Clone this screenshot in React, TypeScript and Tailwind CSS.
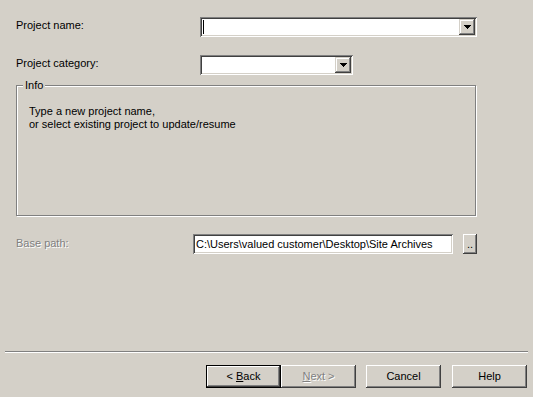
const sunken =
  "shadow-[inset_1px_1px_0_#808080,inset_-1px_-1px_0_#ffffff,inset_2px_2px_0_#404040,inset_-2px_-2px_0_#d4d0c8]";
const raised =
  "shadow-[inset_-1px_-1px_0_#404040,inset_1px_1px_0_#ffffff,inset_-2px_-2px_0_#808080,inset_2px_2px_0_#d4d0c8]";
const comboBtn =
  "shadow-[inset_-1px_-1px_0_#404040,inset_1px_1px_0_#d4d0c8,inset_-2px_-2px_0_#808080,inset_2px_2px_0_#ffffff]";

const Arrow = () => (
  <svg width="7" height="4" viewBox="0 0 7 4">
    <path d="M0 0h7v1H0zM1 1h5v1H1zM2 2h3v1H2zM3 3h1v1H3z" fill="#000" />
  </svg>
);

const Combo = ({ width, caret }: { width: string; caret?: boolean }) => (
  <div className={`${width} h-5 bg-white flex items-center p-[2px] ${sunken}`}>
    <div className="flex-1 h-full flex items-center pl-[1px]">
      {caret && <div className="w-px h-[14px] bg-black" />}
    </div>
    <div className={`w-4 h-4 bg-[#d4d0c8] flex items-center justify-center ${comboBtn}`}>
      <Arrow />
    </div>
  </div>
);

const Button = ({
  children,
  isDefault,
  disabled,
  className,
}: {
  children: React.ReactNode;
  isDefault?: boolean;
  disabled?: boolean;
  className?: string;
}) => (
  <div
    className={`w-[75px] h-[23px] flex items-center justify-center ${
      isDefault ? "border border-black" : ""
    } ${className ?? ""}`}
  >
    <div
      className={`w-full h-full flex items-center justify-center ${raised} ${
        disabled ? "text-[#808080] [text-shadow:1px_1px_0_#ffffff]" : ""
      }`}
    >
      {children}
    </div>
  </div>
);

const App = () => {
  return (
    <div className="w-[533px] h-[397px] bg-[#d4d0c8] flex flex-col font-['Liberation_Sans',Arial,sans-serif] text-[11px] leading-[13px] text-black">
      <div className="flex items-start mt-[17px]">
        <span className="w-[200px] pl-4 mt-[2px]">Project name:</span>
        <Combo width="w-[277px]" caret />
      </div>

      <div className="flex items-start mt-[18px]">
        <span className="w-[200px] pl-4 mt-[2px]">Project category:</span>
        <Combo width="w-[153px]" />
      </div>

      <div className="relative mt-[10px] ml-4 w-[460px] h-[131px] border border-[#808080] shadow-[1px_1px_0_#ffffff,inset_1px_1px_0_#ffffff] pt-[19px] pl-[12px]">
        <span className="absolute -top-[7px] left-[6px] px-[2px] bg-[#d4d0c8]">Info</span>
        <div>Type a new project name,</div>
        <div>or select existing project to update/resume</div>
      </div>

      <div className="flex items-start mt-[18px]">
        <span className="w-[193px] pl-4 mt-[3px] text-[#808080] [text-shadow:1px_1px_0_#ffffff]">
          Base path:
        </span>
        <div className={`w-[260px] h-5 bg-white flex items-center pl-[3px] ${sunken}`}>
          C:\Users\valued customer\Desktop\Site Archives
        </div>
        <div className={`ml-[10px] w-[14px] h-[20px] flex items-end justify-center pb-[3px] ${raised}`}>
          ..
        </div>
      </div>

      <div className="mt-[97px] mx-[5px] h-[2px] border-t border-[#808080] border-b border-b-white" />

      <div className="flex justify-end mt-[12px] pr-[6px]">
        <Button isDefault>
          &lt; <span className="underline ml-[3px]">B</span>ack
        </Button>
        <Button disabled>
          <span className="underline">N</span>ext &gt;
        </Button>
        <Button className="ml-[10px]">Cancel</Button>
        <Button className="ml-[11px]">Help</Button>
      </div>
    </div>
  );
};

export default App;
